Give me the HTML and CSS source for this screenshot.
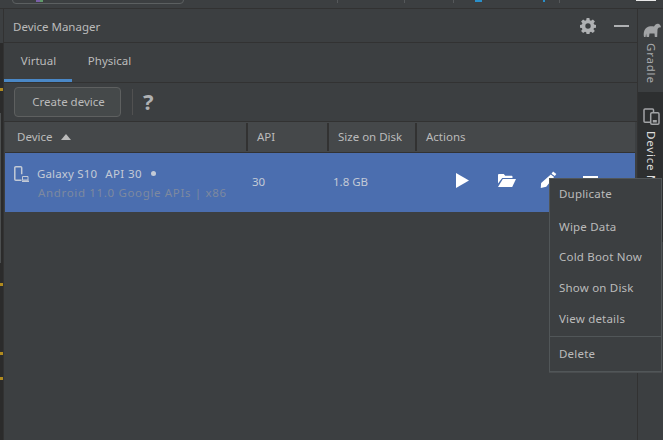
FILE: index.html
```html
<!DOCTYPE html>
<html lang="en">
<head>
<meta charset="utf-8">
<title>Device Manager</title>
<link rel="stylesheet" href="styles.css">
</head>
<body>
<div class="app">
  <div class="topstrip">
    <span class="tb-box"><span class="tb-purple"></span></span>
    <span class="tb-sep s1"></span>
    <span class="tb-sep s2"></span>
    <span class="tb-sep s3"></span>
    <span class="tb-blue b1"></span>
    <span class="tb-blue b2"></span>
    <span class="tb-sep s4"></span>
    <span class="tb-white"></span>
  </div>
  <div class="main">
    <div class="gutter">
      <span class="thumb"></span>
      <span class="mark m1"></span>
      <span class="mark m2"></span>
      <span class="mark m3"></span>
      <span class="mark m4"></span>
    </div>
    <section class="panel">
      <header class="titlebar">
        <span class="title">Device Manager</span>
        <span class="title-actions">
          <svg class="gear" width="16" height="16" viewBox="0 0 16 16"><path fill="#afb1b3" fill-rule="evenodd" d="M6.600 0h2.800l.4 2.200 1.200.5 1.900-1.300 2 2-1.300 1.900.5 1.200 2 .4v2.800l-2.100.4-.5 1.200 1.300 1.800-2 2-1.800-1.300-1.200.5-.4 2.100H6.600l-.4-2.100-1.200-.5-1.900 1.300-2-2 1.300-1.800-.5-1.200L0 9.700V6.900l1.900-.4.500-1.200L1.100 3.400l2-2L5 2.700l1.200-.5zM8 5.300a2.700 2.700 0 1 0 0 5.400 2.700 2.700 0 0 0 0-5.400z"/></svg>
          <span class="minimize"></span>
        </span>
      </header>
      <nav class="tabs">
        <span class="tab active">Virtual</span>
        <span class="tab second">Physical</span>
      </nav>
      <div class="toolbar">
        <button class="create">Create device</button>
        <span class="tool-sep"></span>
        <span class="help">?</span>
      </div>
      <div class="table-head">
        <div class="th th-device">Device <svg class="sort" width="10" height="6" viewBox="0 0 10 6"><path fill="#bbbbbb" d="M5 0l5 6H0z"/></svg></div>
        <div class="th">API</div>
        <div class="th">Size on Disk</div>
        <div class="th">Actions</div>
      </div>
      <div class="row">
        <div class="cell-device">
          <svg class="dev-icon" width="15" height="16" viewBox="0 0 15 16"><path fill="none" stroke="#c3cad6" stroke-width="1.500" d="M7.500 14.300H1.800a1 1 0 0 1-1-1V1.800a1 1 0 0 1 1-1h4.900a1 1 0 0 1 1 1v6.400"/><path fill="none" stroke="#c3cad6" stroke-width="1" d="M8.500 10.500h5.500v3.500H8.500z"/><path fill="#c3cad6" d="M8 14.400h7V16H8z"/></svg>
          <div class="dev-text">
            <div class="dev-name"><span class="dev-model">Galaxy S10</span><span class="dev-api">API 30</span><span class="dot"></span></div>
            <div class="dev-sub">Android 11.0 Google APIs | x86</div>
          </div>
        </div>
        <div class="cell">30</div>
        <div class="cell">1.8 GB</div>
        <div class="cell-actions">
          <svg class="act-play" width="13" height="15" viewBox="0 0 13 15"><path fill="#fff" d="M0 0l13 7.500L0 15z"/></svg>
          <svg class="act-folder" width="18" height="13" viewBox="0 0 18 13"><path fill="#fff" d="M0 1.200C0 .500.500 0 1.200 0h4.600l1.400 1.800h6.300c.6 0 1 .4 1 1V4H4.200L0 9.500z"/><path fill="#fff" d="M4.800 5H18l-3.800 8H0z"/></svg>
          <svg class="act-edit" width="17" height="17" viewBox="0 0 18 18"><path fill="#fff" d="M13.800.600l3.500 2.600-1.600 2.200-3.500-2.600zM11.400 3.800l3.500 2.600-8.300 10.400L.800 18l.4-5.200z"/></svg>
          <svg class="act-more" width="15" height="3" viewBox="0 0 15 3"><path fill="#fff" d="M0 0h15v3H0z"/></svg>
        </div>
      </div>
    </section>
    <aside class="rail">
      <div class="rail-btn">
        <svg width="18" height="14" viewBox="0 0 18 14"><path fill="#a2a4a6" d="M1 14C.300 10.500 1 6.500 3.500 4.800 6 3 9 3.300 11 3.600 12 1.400 14 .300 15.800 1c1.300.5 1.900 2 2.200 3.200l-1.800.300c-1 .1-1.400 1-1.700 2l-.3 7.500h-2.400l-.3-3.500H6.500L6 14H3.600l-.5-3.500L2.600 14z"/></svg>
        <span class="rail-label">Gradle</span>
      </div>
      <div class="rail-btn selected">
        <svg width="17" height="17" viewBox="0 0 17 17"><path fill="none" stroke="#a2a4a6" stroke-width="1.500" d="M7 14.200H2a1 1 0 0 1-1-1V2a1 1 0 0 1 1-1h7.500a1 1 0 0 1 1 1v2"/><rect x="7.700" y="4.800" width="8.300" height="11.400" rx="1.200" fill="none" stroke="#a2a4a6" stroke-width="1.500"/><path fill="#a2a4a6" d="M9.800 12h4v2.500h-4z"/></svg>
        <span class="rail-label strong">Device M</span>
      </div>
    </aside>
  </div>
  <ul class="menu">
    <li class="m-dup">Duplicate</li>
    <li class="m-wipe">Wipe Data</li>
    <li class="m-cold">Cold Boot Now</li>
    <li class="m-show">Show on Disk</li>
    <li class="m-view">View details</li>
    <li class="m-del">Delete</li>
  </ul>
</div>
</body>
</html>
```
FILE: styles.css
```css
* { box-sizing: border-box; }
html, body { margin: 0; height: 100%; }
body {
  background: #3c3f41;
  color: #bbbbbb;
  font-family: "Noto Sans", "Noto Sans CJK KR", sans-serif;
  font-size: 11.500px;
  overflow: hidden;
}
.app { position: relative; width: 663px; height: 440px; display: flex; flex-direction: column; overflow: hidden; }

.topstrip { position: relative; height: 9px; flex: none; border-bottom: 1px solid #323232; }
.tb-box { position: absolute; left: 12px; top: -6px; width: 172px; height: 10px; border: 1px solid #5c6061; border-radius: 4px; }
.tb-purple { position: absolute; left: 23px; top: 5px; width: 7px; height: 2px; background: linear-gradient(90deg, #7a5fa8 50%, #5f9a6a 50%); }
.tb-sep { position: absolute; top: 0; width: 1px; height: 3px; background: #55585a; }
.s1 { left: 337px; } .s2 { left: 404px; } .s3 { left: 453px; } .s4 { left: 559px; }
.tb-blue { position: absolute; top: 0; height: 2px; background: #2a8fc9; }
.b1 { left: 475px; width: 7px; } .b2 { left: 543px; width: 2px; }
.tb-white { position: absolute; left: 636px; top: 0; width: 20px; height: 1px; background: #e8e8e8; }

.main { flex: 1; display: flex; min-height: 0; }

.gutter { position: relative; width: 4px; flex: none; background: linear-gradient(#3c3f41 34px, #2b2b2b 34px); border-right: 1px solid #323232; }
.thumb { position: absolute; left: 0; top: 104px; width: 1px; height: 150px; background: #4c4f50; }
.mark { position: absolute; left: 0; width: 3px; height: 3px; background: #b08a1e; }
.m1 { top: 79px; } .m2 { top: 274px; } .m3 { top: 343px; } .m4 { top: 368px; }

.panel { flex: 1; min-width: 0; display: flex; flex-direction: column; }

.titlebar { height: 34px; flex: none; display: flex; align-items: center; justify-content: space-between; padding: 1px 8px 0 9px; border-bottom: 1px solid #323232; }
.title-actions { display: flex; align-items: center; gap: 18px; }
.minimize { display: block; width: 15px; height: 2px; background: #afb1b3; }

.tabs { height: 40px; flex: none; display: flex; border-bottom: 1px solid #323232; }
.tab { width: 68px; display: flex; align-items: center; justify-content: center; padding-bottom: 5px; }
.tab.active { border-bottom: 3px solid #4a88c7; padding: 0 0 2px 1px; }
.tab.second { padding-left: 7px; }

.toolbar { height: 39px; flex: none; display: flex; align-items: center; padding: 0 0 0 10px; border-bottom: 1px solid #323232; }
.create { width: 107px; height: 30px; background: #45494a; border: 1px solid #5e6060; border-radius: 4px; color: #bbbbbb; font: inherit; padding: 0 0 2px 2px; }
.tool-sep { width: 1px; height: 26px; margin-left: 11px; background: #515151; }
.help { margin: 0 0 2px 10px; font-size: 22px; font-weight: 700; line-height: 1; color: #afb1b3; }

.table-head, .row { display: grid; grid-template-columns: 243px 81px 88px 1fr; margin: 0 2px 0 1px; }
.table-head { height: 31px; flex: none; background: #45484a; border-bottom: 1px solid #323232; align-items: center; }
.th { height: 28px; display: flex; align-items: center; padding: 0 0 2px 9px; border-right: 2px solid #323232; }
.th:last-child { border-right: 0; }
.th-device { padding-left: 12px; gap: 9px; }
.sort { margin-top: 1px; }

.row { height: 59px; flex: none; background: #4b6eaf; color: #c3cad6; align-items: center; }
.cell-device { display: flex; align-items: flex-start; padding: 13px 0 0 9px; align-self: stretch; gap: 8px; }
.dev-icon { flex: none; }
.dev-text { margin-top: -1px; }
.dev-name { display: flex; align-items: center; height: 16px; }
.dev-model { letter-spacing: .15px; }
.dev-api { margin-left: 8px; letter-spacing: .4px; }
.dot { width: 5px; height: 5px; border-radius: 50%; background: #c3cad6; margin-left: 9px; }
.dev-sub { margin: 4px 0 0 1px; color: #7d899f; letter-spacing: .66px; white-space: nowrap; }
.cell { padding: 0 0 2px 4px; }
.cell-actions { display: flex; align-items: flex-start; padding-left: 39px; align-self: stretch; }
.act-play { margin-top: 20px; }
.act-folder { margin: 21px 0 0 29px; }
.act-edit { margin: 18px 0 0 24px; }
.act-more { margin: 23px 0 0 26px; }

.rail { width: 26px; flex: none; border-left: 1px solid #323232; display: flex; flex-direction: column; }
.rail-btn { display: flex; flex-direction: column; align-items: center; gap: 6px; padding: 14px 0 6px 2px; height: 83px; flex: none; }
.rail-btn.selected { background: #2d2f30; height: 150px; padding-top: 16px; }
.rail-label { writing-mode: vertical-rl; color: #a9abad; letter-spacing: .8px; white-space: nowrap; }
.rail-label.strong { color: #dddddd; }

.menu { position: absolute; left: 549px; top: 178px; width: 113px; height: 194px; margin: 0; padding: 4px 0 0; list-style: none; background: #3c3f41; border: 1px solid #515658; box-shadow: 0 1px 0 #4a4d4f; display: flex; flex-direction: column; letter-spacing: .2px; }
.menu li { padding-left: 9px; height: 20px; display: flex; align-items: center; flex: none; }
.m-wipe { margin-top: 13px; }
.m-cold { margin-top: 10px; }
.m-show { margin-top: 11px; }
.m-view { margin-top: 11px; }
.menu .m-del { margin-top: 8px; border-top: 1px solid #515658; height: 28px; padding-top: 6px; }
```
